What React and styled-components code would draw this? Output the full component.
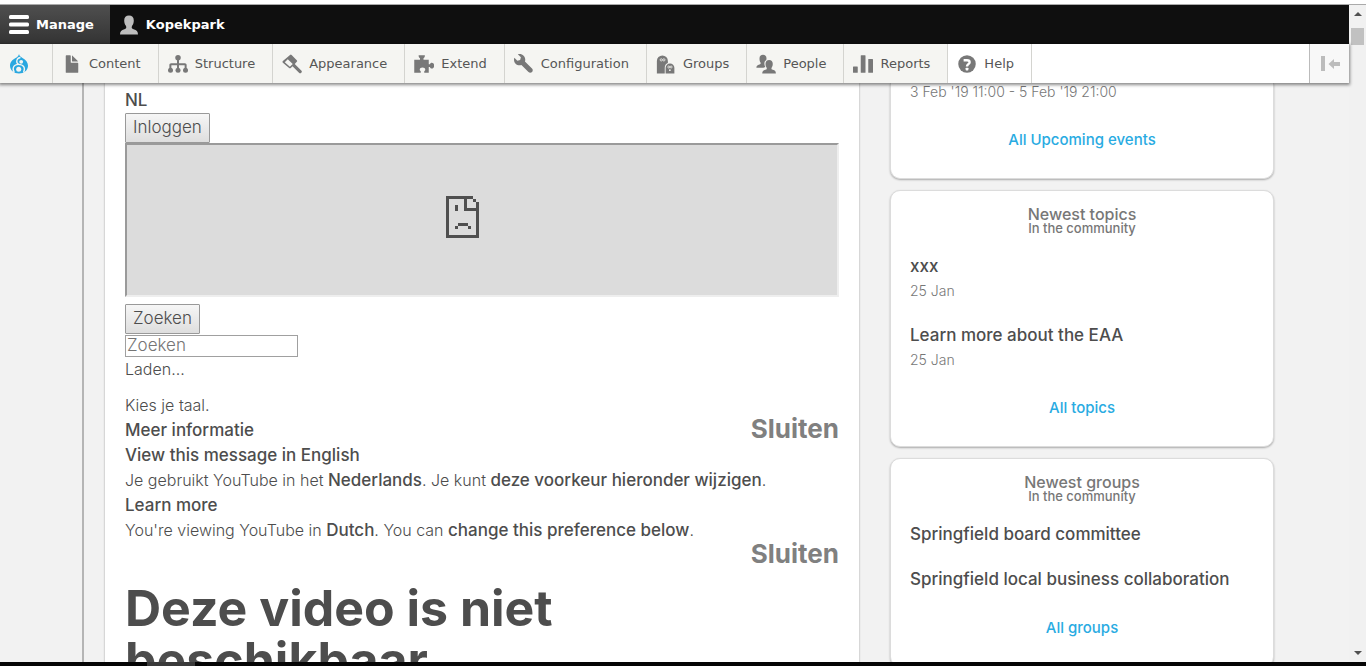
import React from "react";
import styled, { createGlobalStyle } from "styled-components";

const sans = `Inter, "Liberation Sans", sans-serif`;
const uiFont = `"DejaVu Sans", Verdana, sans-serif`;

const GlobalStyle = createGlobalStyle`
  * { box-sizing: border-box; }
  html, body { margin: 0; padding: 0; }
  body { background: #f2f2f2; color: #4d4d4d; font-family: ${sans}; font-size: 16px; }
  a { text-decoration: none; color: inherit; }
  h1, h2, p { margin: 0; }
`;

const Screen = styled.div`
  height: 100vh;
  display: flex;
  flex-direction: column;
  overflow: hidden;
`;

const TopEdge = styled.div`
  flex: 0 0 5px;
  background: #fff;
  border-bottom: 1px solid #aaa;
`;

const BottomEdge = styled.div`
  flex: 0 0 4px;
  background: #050505;
  padding-left: 147px;
`;

const BottomTab = styled.div`
  width: 48px;
  height: 4px;
  background: #3a3a3a;
`;

const Middle = styled.div`
  flex: 1;
  min-height: 0;
  display: flex;
`;

const Page = styled.div`
  flex: 1;
  min-width: 0;
  display: flex;
  flex-direction: column;
`;

const Bar = styled.nav`
  flex: 0 0 39px;
  display: flex;
  background: #0f0f0f;
  font: bold 13px/39px ${uiFont};
  color: #fff;
`;

const BarTab = styled.a`
  display: flex;
  align-items: center;
  gap: 7px;
  padding: 0 16px 0 9px;
  background: ${(p) => (p.$active ? "linear-gradient(#4f4f4f, #333)" : "none")};
`;

const Tray = styled.nav`
  flex: 0 0 39px;
  display: flex;
  background: #fff;
  box-shadow: 0 1px 3px 1px rgba(0, 0, 0, 0.45);
  position: relative;
  z-index: 1;
  font: 13px/39px ${uiFont};
  color: #565656;
`;

const TrayItem = styled.a`
  display: flex;
  align-items: center;
  gap: 7px;
  padding: 0 17px 0 9px;
  border-right: 1px solid #d4d4d0;
  background: ${(p) => (p.$plain ? "#fff" : "#f5f5f2")};
`;

const HomeItem = styled(TrayItem)`
  padding-right: 23px;
`;

const TrayToggle = styled.button`
  width: 40px;
  margin-left: auto;
  padding: 0;
  border: 0;
  border-left: 1px solid #bbb;
  background: #f8f8f8;
  display: flex;
  align-items: center;
  justify-content: center;
`;

const Icon = styled.svg`
  width: 20px;
  height: 20px;
  flex: none;
  fill: ${(p) => p.$tone || "#787878"};
`;

const Scroller = styled.div`
  flex: 0 0 17px;
  background: #f1f1f1;
  display: flex;
  flex-direction: column;
  align-items: center;
  padding: 7px 0;
`;

const Arrow = styled.svg`
  width: 8px;
  height: 4px;
  fill: #505050;
`;

const Thumb = styled.div`
  width: 13px;
  height: 17px;
  margin: 12px 0 auto;
  background: #c1c1c1;
`;

const Content = styled.div`
  flex: 1;
  min-height: 0;
  overflow: hidden;
  display: grid;
  grid-template-columns: minmax(0, 1fr) 384px;
  gap: 31px;
  margin-left: 82px;
  padding: 0 75px 0 21px;
  border-left: 2px solid #b5b5b5;
`;

const Article = styled.main`
  background: #fff;
  padding: 5px 20px 0;
  box-shadow: 0 0 2px rgba(0, 0, 0, 0.35);
  font-weight: 300;
  line-height: 25px;
`;

const Strong = styled.a`
  font-size: 17px;
  font-weight: 500;
`;

const GreyButton = styled.button`
  display: block;
  height: 30px;
  padding: 0 7px 2px;
  border: 1px solid #999;
  border-radius: 1px;
  background: linear-gradient(#f6f6f6, #dedede);
  color: inherit;
  font: 300 17px/25px ${sans};
`;

const Embed = styled.div`
  height: 154px;
  margin-bottom: 7px;
  border: 2px solid;
  border-color: #9a9a9a #eee #eee #9a9a9a;
  background: #dcdcdc;
  display: flex;
  align-items: center;
  justify-content: center;
`;

const EmbedIcon = styled.svg`
  width: 33px;
  height: 42px;
  margin: 0 39px 6px 0;
`;

const SearchBox = styled.input`
  display: block;
  width: 173px;
  height: 22px;
  margin-top: 1px;
  padding: 0 1px 2px;
  border: 1px solid #a0a0a0;
  border-radius: 0;
  background: #fff;
  font: 300 17px/20px ${sans};
  &::placeholder { color: #757575; opacity: 1; }
`;

const Line = styled.p`
  height: 25px;
  margin-bottom: ${(p) => (p.$spaced ? "11px" : "0")};
`;

const CloseRow = styled.div`
  display: flex;
  height: 25px;
  justify-content: space-between;
  align-items: center;
`;

const CloseButton = styled.button`
  margin-left: auto;
  padding: 0 0 4px;
  border: 0;
  background: none;
  color: #808080;
  font: bold 26px/25px ${sans};
`;

const Headline = styled.h1`
  margin-top: 14px;
  font-size: 50px;
  font-weight: 700;
  line-height: 52px;
`;

const Side = styled.aside`
  display: flex;
  flex-direction: column;
  gap: 11px;
`;

const Card = styled.section`
  flex: none;
  padding: ${(p) => (p.$cut ? "0 19px 28px" : "15px 19px 28px")};
  border: 1px solid #dcdcdc;
  border-top-width: ${(p) => (p.$cut ? "0" : "1px")};
  border-radius: ${(p) => (p.$cut ? "0 0 10px 10px" : "10px")};
  background: #fff;
  box-shadow: 0 1px 2px rgba(0, 0, 0, 0.3);
`;

const CardHead = styled.header`
  margin-bottom: 20px;
  text-align: center;
  color: #777;
  font-weight: 500;
`;

const CardTitle = styled.h2`
  font-size: 16px;
  font-weight: 500;
  line-height: 16px;
`;

const CardSub = styled.p`
  font-size: 13px;
  line-height: 12px;
`;

const Entry = styled.div`
  & + & { margin-top: 20px; }
`;

const EntryTitle = styled.a`
  display: block;
  font-size: 17px;
  font-weight: 500;
  line-height: 25px;
`;

const EntryDate = styled.div`
  color: #777;
  font-size: 14px;
  font-weight: 300;
  line-height: 24px;
`;

const EventDate = styled(EntryDate)`
  padding-bottom: 4px;
  line-height: 17px;
`;

const MoreLink = styled.a`
  display: block;
  margin-top: 26px;
  color: #29abe2;
  font-size: 15px;
  font-weight: 500;
  line-height: 20px;
  text-align: center;
`;

const shapes = {
  file: (
    <path d="M12.502 7h-5c-.276 0-.502-.225-.502-.5v-5c0-.275-.225-.5-.5-.5h-3c-.275 0-.5.225-.5.5v13.029c0 .275.225.5.5.5h9.002c.275 0 .5-.225.5-.5v-7.029c0-.275-.225-.5-.5-.5zM8.502 6h4c.275 0 .34-.159.146-.354l-4.293-4.292c-.195-.195-.353-.129-.353.146v4c0 .275.225.5.5.5z" />
  ),
  tree: (
    <>
      <path d="M7.2 4h1.600v3.300H13.500c.8 0 1.400.6 1.400 1.400V12h-1.600V9H8.800v3H7.200V9H2.700v3H1.100V8.700c0-.8.6-1.400 1.400-1.400h4.700z" />
      <circle cx="8" cy="3" r="2.200" />
      <circle cx="2" cy="13" r="2" />
      <circle cx="8" cy="13" r="2" />
      <circle cx="14" cy="13" r="2" />
    </>
  ),
  brush: (
    <path fillRule="evenodd" d="M6.4.8a.9.9 0 0 1 1.3 0l4.1 4.1a.9.9 0 0 1 0 1.3L10.200 7.900l5.200 5.200a1.300 1.300 0 0 1-1.800 1.900L8.400 9.700 7 11.100a.9.9 0 0 1-1.300 0L.7 6.900a.9.9 0 0 1 0-1.300zM4.600 4.200 2.200 6.500l4.100 3.700 2.300-2.300z" />
  ),
  puzzle: (
    <path d="M.2 4.500h4.600V3.300C4.100 3 3.700 2.300 3.700.9h5c0 1.400-.4 2.100-1.100 2.400v1.200h4.200v3.700h.9c.3-.8.9-1.200 1.600-1.200 1.100 0 1.800 1 1.800 2.300s-.7 2.300-1.800 2.300c-.7 0-1.300-.4-1.600-1.200h-.9V15H8.200v-1.300c.6-.4.8-.8.8-1.400 0-.9-.9-1.600-2.200-1.600s-2.200.7-2.200 1.600c0 .6.200 1 .8 1.400V15H.2z" />
  ),
  wrench: (
    <path d="M14.416 11.586l-.01-.008-5.656-5.657c.15-.449.252-.921.252-1.421 0-2.485-2.016-4.500-4.502-4.500-.505 0-.981.102-1.434.255l2.431 2.431-.588 2.196-2.196.588-2.445-2.445c-.162.464-.268.956-.268 1.475 0 2.486 2.014 4.500 4.500 4.500.5 0 .972-.102 1.421-.251l5.667 5.665c.781.781 2.047.781 2.828 0s.781-2.047 0-2.828z" />
  ),
  groups: (
    <>
      <path d="M.7 15.500V5.500a4.400 4.400 0 0 1 8.800 0v1.700A4.100 4.100 0 0 0 7 11v4.500z" />
      <path d="M7.700 15.500V11a3.500 3.500 0 0 1 7 0v4.500z" />
      <g fill="none" stroke="#f5f5f2" strokeWidth=".6">
        <circle cx="4.200" cy="4.700" r=".9" />
        <circle cx="6.300" cy="4.700" r=".9" />
        <circle cx="10.200" cy="10.400" r=".8" />
        <circle cx="12.100" cy="10.400" r=".8" />
      </g>
      <circle cx="11.100" cy="12.900" r=".7" fill="#f5f5f2" />
    </>
  ),
  people: (
    <>
      <path d="M5.600.6c1.700 0 2.800 1.100 2.800 2.900 0 .6-.1 1-.3 1.500C6.800 5.700 6.500 7 6.800 8.500c.1.900.5 1.400.6 1.800l-1.500.7H.3c0-1.600.7-2.200 2.500-2.700.9-.3 1.200-.6.8-1.500C3 5.700 2.800 4.900 2.800 3.500 2.800 1.700 3.900.6 5.600.6z" />
      <path d="M10.500 4.800c1.800 0 2.900 1.200 2.900 3 0 1.300-.3 2.200-.9 3.100-.4 1 0 1.400 1 1.700 1.700.5 2.400 1.200 2.400 2.900H5c0-1.700.8-2.400 2.500-2.900 1-.3 1.400-.7 1-1.700-.6-.9-.9-1.800-.9-3.100 0-1.800 1.100-3 2.900-3z" />
    </>
  ),
  bars: (
    <>
      <rect x="0" y="10" width="3.800" height="5" rx=".4" />
      <rect x="6.200" y="1" width="3.800" height="14" rx=".4" />
      <rect x="12.200" y="4" width="3.800" height="11" rx=".4" />
    </>
  ),
  help: (
    <>
      <circle cx="8" cy="8" r="7" />
      <path d="M5.300 5H8c1.300 0 2.100.6 2.100 1.500 0 1.600-2.100 1.700-2.100 3.500" fill="none" stroke="#fff" strokeWidth="1.900" />
      <rect x="6.900" y="10.900" width="2.200" height="2.200" rx=".5" fill="#fff" />
    </>
  ),
};

const items = [
  ["Content", "file"],
  ["Structure", "tree"],
  ["Appearance", "brush"],
  ["Extend", "puzzle"],
  ["Configuration", "wrench"],
  ["Groups", "groups"],
  ["People", "people"],
  ["Reports", "bars"],
  ["Help", "help"],
];

const SideCard = ({ title, entries, more }) => (
  <Card>
    <CardHead>
      <CardTitle>{title}</CardTitle>
      <CardSub>In the community</CardSub>
    </CardHead>
    {entries.map(([name, date]) => (
      <Entry key={name}>
        <EntryTitle href="#">{name}</EntryTitle>
        {date && <EntryDate>{date}</EntryDate>}
      </Entry>
    ))}
    <MoreLink href="#">{more}</MoreLink>
  </Card>
);

export default function App() {
  return (
    <Screen>
      <GlobalStyle />
      <TopEdge />
      <Middle>
        <Page>
          <Bar>
            <BarTab href="#" $active>
              <Icon $tone="#fff" viewBox="0 0 20 20">
                <rect x="0" y="0" width="20" height="4" rx="1.500" />
                <rect x="0" y="7.500" width="20" height="4" rx="1.500" />
                <rect x="0" y="15" width="20" height="4" rx="1.500" />
              </Icon>
              Manage
            </BarTab>
            <BarTab href="#">
              <Icon $tone="#bebebe" viewBox="0 0 20 20">
                <path d="M10 .5c3 0 4.800 1.900 4.800 4.900 0 2.100-.6 3.900-1.700 5.400-.9 1.700-.3 2.800 1.500 3.500 3 1 4.400 2.100 4.400 5.200H1c0-3.100 1.400-4.200 4.400-5.200 1.800-.7 2.400-1.800 1.500-3.500C5.800 9.300 5.200 7.500 5.200 5.400 5.200 2.400 7 .5 10 .5z" />
              </Icon>
              Kopekpark
            </BarTab>
          </Bar>
          <Tray>
            <HomeItem href="#" aria-label="Home">
              <Icon $tone="#29a8e0" viewBox="0 0 20 20">
                <path d="M10 0c.4 1.800 1.500 2.600 3.500 4 3.300 1.900 5.500 4.400 5.500 7.800C19 16.300 15 19.500 10 19.500S1 16.300 1 11.800C1 8 3.200 5.800 6.600 4 8.600 2.800 9.600 2 10 0z" />
                <g fill="none" stroke="#f5f5f2" strokeWidth="1.300">
                  <path d="M5.300 18.500C2.500 14 5 10.300 9.500 10.300c4.800 0 7.500 3.500 5 8.200" />
                  <path d="M9.500 10.300C6.500 8.500 7.500 4 11.500 3.500" />
                </g>
                <circle cx="12.200" cy="7.800" r="1.900" fill="#f5f5f2" />
                <circle cx="9.700" cy="15.200" r="2.500" fill="#f5f5f2" />
              </Icon>
            </HomeItem>
            {items.map(([label, shape]) => (
              <TrayItem key={label} href="#" $plain={shape === "help"}>
                <Icon viewBox="0 0 16 16">{shapes[shape]}</Icon>
                {label}
              </TrayItem>
            ))}
            <TrayToggle aria-label="Vertical orientation">
              <Icon $tone="#bcbcbc" viewBox="0 0 20 20">
                <rect x="1" y="2" width="4" height="15" />
                <path d="M8.500 10 14 5v3h6v4h-6v3z" />
              </Icon>
            </TrayToggle>
          </Tray>
          <Content>
            <Article>
              <Line><Strong as="span">NL</Strong></Line>
              <GreyButton>Inloggen</GreyButton>
              <Embed>
                <EmbedIcon viewBox="0 0 33 42" shapeRendering="crispEdges">
                  <path fill="#4f4f4f" fillRule="evenodd" d="M0 0H27V3H30V6H33V42H0zM3 3V39H30V15H18V3zM21 3V12H30V6H27V3z" />
                  <path fill="#4f4f4f" d="M9 9h3v6H9zM12 27h10v3H12zM9 30h3v3H9zM22 30h3v3h-3z" />
                </EmbedIcon>
              </Embed>
              <GreyButton>Zoeken</GreyButton>
              <SearchBox type="text" placeholder="Zoeken" aria-label="Zoeken" />
              <Line $spaced>Laden...</Line>
              <Line>Kies je taal.</Line>
              <CloseRow>
                <Strong href="#">Meer informatie</Strong>
                <CloseButton>Sluiten</CloseButton>
              </CloseRow>
              <Line><Strong href="#">View this message in English</Strong></Line>
              <Line>
                Je gebruikt YouTube in het <Strong as="span">Nederlands</Strong>. Je kunt{" "}
                <Strong href="#">deze voorkeur hieronder wijzigen</Strong>.
              </Line>
              <Line><Strong href="#">Learn more</Strong></Line>
              <Line>
                You're viewing YouTube in <Strong as="span">Dutch</Strong>. You can{" "}
                <Strong href="#">change this preference below</Strong>.
              </Line>
              <CloseRow>
                <CloseButton>Sluiten</CloseButton>
              </CloseRow>
              <Headline>
                Deze video is niet
                <br />
                beschikbaar.
              </Headline>
            </Article>
            <Side>
              <Card $cut>
                <EventDate>3 Feb '19 11:00 - 5 Feb '19 21:00</EventDate>
                <MoreLink href="#">All Upcoming events</MoreLink>
              </Card>
              <SideCard
                title="Newest topics"
                entries={[["xxx", "25 Jan"], ["Learn more about the EAA", "25 Jan"]]}
                more="All topics"
              />
              <SideCard
                title="Newest groups"
                entries={[["Springfield board committee"], ["Springfield local business collaboration"]]}
                more="All groups"
              />
            </Side>
          </Content>
        </Page>
        <Scroller>
          <Arrow viewBox="0 0 8 4"><path d="M0 4 4 0l4 4z" /></Arrow>
          <Thumb />
          <Arrow viewBox="0 0 8 4"><path d="M0 0h8L4 4z" /></Arrow>
        </Scroller>
      </Middle>
      <BottomEdge><BottomTab /></BottomEdge>
    </Screen>
  );
}
